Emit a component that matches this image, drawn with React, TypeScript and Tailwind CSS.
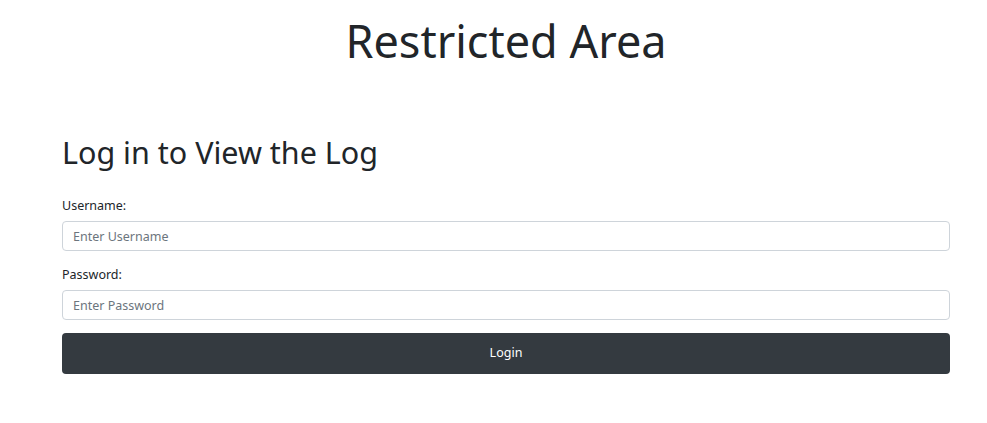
import React from "react";

export default function App() {
    const handleSubmit = (e: React.FormEvent) => {
        e.preventDefault();
    };

    return (
        <div className="min-h-[423px] bg-white text-[#212529] font-['Noto_Sans',sans-serif]">
            <div className="ml-[62px] w-[888px] pt-[12px]">
                <h1 className="text-center text-[45px] leading-[58px] font-normal">Restricted Area</h1>

                <form onSubmit={handleSubmit} className="flex flex-col mt-[62px]">
                    <h2 className="text-[30.5px] leading-[40px] font-normal">Log in to View the Log</h2>

                    <label className="mt-[25px] text-[12.5px] leading-[18px]">Username:</label>
                    <input
                        type="text"
                        placeholder="Enter Username"
                        className="mt-[6px] h-[30px] w-full rounded-[4px] border border-[#ced4da] px-[10px] text-[12.5px] placeholder:text-[#6c757d] outline-none"
                    />

                    <label className="mt-[15px] text-[12.5px] leading-[18px]">Password:</label>
                    <input
                        type="password"
                        placeholder="Enter Password"
                        className="mt-[6px] h-[30px] w-full rounded-[4px] border border-[#ced4da] px-[10px] text-[12.5px] placeholder:text-[#6c757d] outline-none"
                    />

                    <button
                        type="submit"
                        className="mt-[13px] h-[41px] w-full rounded-[4px] bg-[#343a40] text-white text-[12.5px]"
                    >
                        Login
                    </button>
                </form>
            </div>
        </div>
    );
}
